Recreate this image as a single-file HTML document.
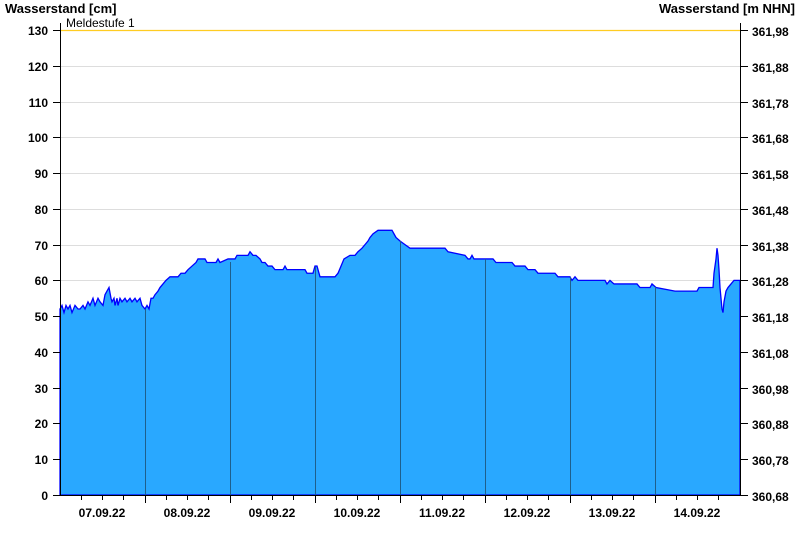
<!DOCTYPE html>
<html><head><meta charset="utf-8"><style>
html,body{margin:0;padding:0;background:#fff;}
svg{display:block;font-family:"Liberation Sans",Arial,sans-serif;}
</style></head><body>
<svg width="800" height="550" viewBox="0 0 800 550" xmlns="http://www.w3.org/2000/svg">
<rect width="800" height="550" fill="#fff"/>
<text x="5" y="13" font-size="13" font-weight="bold">Wasserstand [cm]</text>
<text x="795" y="13" font-size="13" font-weight="bold" text-anchor="end">Wasserstand [m NHN]</text>
<g stroke="#dddddd" stroke-width="1">
<line x1="60" x2="740" y1="66.5" y2="66.5"/><line x1="60" x2="740" y1="102.5" y2="102.5"/>
<line x1="60" x2="740" y1="137.5" y2="137.5"/><line x1="60" x2="740" y1="173.5" y2="173.5"/>
<line x1="60" x2="740" y1="209.5" y2="209.5"/><line x1="60" x2="740" y1="245.5" y2="245.5"/>
<line x1="60" x2="740" y1="280.5" y2="280.5"/><line x1="60" x2="740" y1="316.5" y2="316.5"/>
<line x1="60" x2="740" y1="352.5" y2="352.5"/><line x1="60" x2="740" y1="388.5" y2="388.5"/>
<line x1="60" x2="740" y1="423.5" y2="423.5"/><line x1="60" x2="740" y1="459.5" y2="459.5"/>
</g>
<g transform="translate(0,495) scale(1,-3.577)">
<path fill="#29a8ff" stroke="#0000ff" stroke-width="1.3" vector-effect="non-scaling-stroke" stroke-linejoin="miter" d="M60,0 L60,52 62,53 64,51 66,53 68,52 70,53 72,51 75,53 78,52 80,52 83,53 85,52 88,54 90,53 93,55 95,53 98,55 100,54 103,53 105,56 107,57 109,58 111,55 112,54 114,55 115,53 117,55 118,53 120,55 122,54 125,55 127,54 130,55 132,54 135,55 137,54 140,55 142,53 145,52 147,53 149,52 151,55 153,55 155,56 158,57 160,58 163,59 166,60 170,61 178,61 181,62 185,62 188,63 192,64 196,65 198,66 205,66 207,65 216,65 218,66 220,65 228,66 235,66 237,67 248,67 250,68 253,67 256,67 260,66 262,65 265,65 268,64 272,64 275,63 283,63 285,64 287,63 305,63 307,62 313,62 315,64 317,64 320,61 335,61 338,62 341,64 344,66 350,67 355,67 358,68 362,69 365,70 368,71 370,72 373,73 378,74 392,74 394,73 396,72 400,71 405,70 410,69 445,69 448,68 465,67 468,66 470,66 472,67 474,66 493,66 496,65 512,65 515,64 525,64 528,63 535,63 538,62 555,62 558,61 570,61 572,60 575,61 578,60 605,60 607,59 610,60 614,59 637,59 640,58 650,58 652,59 656,58 675,57 697,57 699,58 713,58 714,62 716,66 717,69 718,67 719,63 720,58 721,55 722,52 723,51 724,54 726,57 728,58 731,59 734,60 740,60 L740,0 Z"/>
</g>
<g stroke="#1e5f8c" stroke-width="1">
<line x1="145.5" x2="145.5" y1="309" y2="495"/><line x1="230.5" x2="230.5" y1="262" y2="495"/>
<line x1="315.5" x2="315.5" y1="267" y2="495"/><line x1="400.5" x2="400.5" y1="241" y2="495"/>
<line x1="485.5" x2="485.5" y1="259" y2="495"/><line x1="570.5" x2="570.5" y1="277" y2="495"/>
<line x1="655.5" x2="655.5" y1="287" y2="495"/>
</g>
<line x1="60" x2="740" y1="30.5" y2="30.5" stroke="#ffcc22" stroke-width="1.2"/>
<text x="66" y="27" font-size="12">Meldestufe 1</text>
<g stroke="#000" stroke-width="1">
<line x1="60.5" x2="60.5" y1="23" y2="495"/><line x1="740.5" x2="740.5" y1="23" y2="495"/>
<line x1="60" x2="741" y1="495.5" y2="495.5"/>
</g>
<g stroke="#000" stroke-width="1" id="lt">
<line x1="53" x2="60" y1="30.5" y2="30.5"/><line x1="53" x2="60" y1="66.5" y2="66.5"/><line x1="53" x2="60" y1="102.5" y2="102.5"/><line x1="53" x2="60" y1="137.5" y2="137.5"/><line x1="53" x2="60" y1="173.5" y2="173.5"/><line x1="53" x2="60" y1="209.5" y2="209.5"/><line x1="53" x2="60" y1="245.5" y2="245.5"/><line x1="53" x2="60" y1="280.5" y2="280.5"/><line x1="53" x2="60" y1="316.5" y2="316.5"/><line x1="53" x2="60" y1="352.5" y2="352.5"/><line x1="53" x2="60" y1="388.5" y2="388.5"/><line x1="53" x2="60" y1="423.5" y2="423.5"/><line x1="53" x2="60" y1="459.5" y2="459.5"/><line x1="53" x2="60" y1="495.5" y2="495.5"/>
<line x1="741" x2="748" y1="30.5" y2="30.5"/><line x1="741" x2="748" y1="66.5" y2="66.5"/><line x1="741" x2="748" y1="102.5" y2="102.5"/><line x1="741" x2="748" y1="137.5" y2="137.5"/><line x1="741" x2="748" y1="173.5" y2="173.5"/><line x1="741" x2="748" y1="209.5" y2="209.5"/><line x1="741" x2="748" y1="245.5" y2="245.5"/><line x1="741" x2="748" y1="280.5" y2="280.5"/><line x1="741" x2="748" y1="316.5" y2="316.5"/><line x1="741" x2="748" y1="352.5" y2="352.5"/><line x1="741" x2="748" y1="388.5" y2="388.5"/><line x1="741" x2="748" y1="423.5" y2="423.5"/><line x1="741" x2="748" y1="459.5" y2="459.5"/><line x1="741" x2="748" y1="495.5" y2="495.5"/>
</g>
<g stroke="#000" stroke-width="1">
<path d="M81.5,495v5M102.5,495v5M123.5,495v5M145.5,495v8M166.5,495v5M187.5,495v5M208.5,495v5M230.5,495v8M251.5,495v5M272.5,495v5M293.5,495v5M315.5,495v8M336.5,495v5M357.5,495v5M378.5,495v5M400.5,495v8M421.5,495v5M442.5,495v5M463.5,495v5M485.5,495v8M506.5,495v5M527.5,495v5M548.5,495v5M570.5,495v8M591.5,495v5M612.5,495v5M633.5,495v5M655.5,495v8M676.5,495v5M697.5,495v5M718.5,495v5"/>
</g>
<g font-size="12" font-weight="bold" text-anchor="end">
<text x="48" y="35">130</text><text x="48" y="71">120</text><text x="48" y="107">110</text><text x="48" y="142">100</text><text x="48" y="178">90</text><text x="48" y="214">80</text><text x="48" y="250">70</text><text x="48" y="285">60</text><text x="48" y="321">50</text><text x="48" y="357">40</text><text x="48" y="393">30</text><text x="48" y="428">20</text><text x="48" y="464">10</text><text x="48" y="500">0</text>
</g>
<g font-size="12" font-weight="bold">
<text x="752" y="36">361,98</text><text x="752" y="72">361,88</text><text x="752" y="108">361,78</text><text x="752" y="143">361,68</text><text x="752" y="179">361,58</text><text x="752" y="215">361,48</text><text x="752" y="251">361,38</text><text x="752" y="286">361,28</text><text x="752" y="322">361,18</text><text x="752" y="358">361,08</text><text x="752" y="394">360,98</text><text x="752" y="429">360,88</text><text x="752" y="465">360,78</text><text x="752" y="501">360,68</text>
</g>
<g font-size="12" font-weight="bold" text-anchor="middle">
<text x="102" y="517">07.09.22</text><text x="187" y="517">08.09.22</text><text x="272" y="517">09.09.22</text><text x="357" y="517">10.09.22</text><text x="442" y="517">11.09.22</text><text x="527" y="517">12.09.22</text><text x="612" y="517">13.09.22</text><text x="697" y="517">14.09.22</text>
</g>
</svg>
</body></html>
